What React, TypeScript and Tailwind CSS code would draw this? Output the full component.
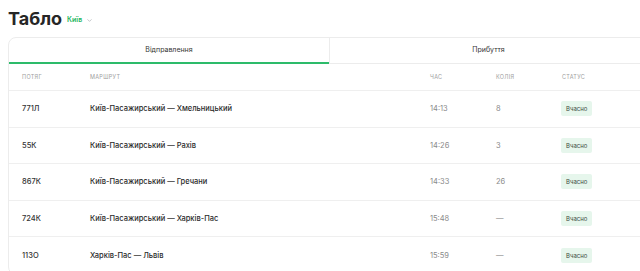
import React, { useState } from 'react';
import { ChevronDown } from 'lucide-react';

type Train = { num: string; route: string; time: string; track: string; status: string };

const trains: Train[] = [
  { num: '771Л', route: 'Київ-Пасажирський — Хмельницький', time: '14:13', track: '8', status: 'Вчасно' },
  { num: '55К', route: 'Київ-Пасажирський — Рахів', time: '14:26', track: '3', status: 'Вчасно' },
  { num: '867К', route: 'Київ-Пасажирський — Гречани', time: '14:33', track: '26', status: 'Вчасно' },
  { num: '724К', route: 'Київ-Пасажирський — Харків-Пас', time: '15:48', track: '—', status: 'Вчасно' },
  { num: '113О', route: 'Харків-Пас — Львів', time: '15:59', track: '—', status: 'Вчасно' },
];

const cols = 'grid grid-cols-[68px_340px_66px_66px_1fr] items-center pl-[13px]';

export default function App() {
  const [tab, setTab] = useState<'dep' | 'arr'>('dep');

  return (
    <div className="w-[640px] h-[271px] overflow-hidden bg-white font-['Inter',sans-serif] text-[#222]">
      {/* Heading */}
      <div className="flex items-center pl-2 pt-[1px] h-[37px]">
        <h1 className="text-[18px] font-bold leading-none text-[#262626]">Табло</h1>
        <button className="ml-[5px] mt-[2px] flex items-center gap-[4px] text-[7px] font-semibold text-[#22b55c]">
          Київ
          <ChevronDown size={7} className="text-[#9aa0a6]" strokeWidth={2} />
        </button>
      </div>

      {/* Card */}
      <div className="ml-2 w-[640px] border border-[#ececec] rounded-[8px] overflow-hidden">
        <div className="flex h-[26px] text-[7px] text-[#333]">
          <button
            onClick={() => setTab('dep')}
            className={`w-[320px] flex items-center justify-center border-b-2 ${tab === 'dep' ? 'border-[#2dbb6a]' : 'border-[#ececec]'}`}
          >
            Відправлення
          </button>
          <button
            onClick={() => setTab('arr')}
            className={`flex-1 flex items-center justify-center border-l border-[#ececec] border-b ${tab === 'arr' ? 'border-b-2 border-b-[#2dbb6a]' : 'border-b-[#ececec]'}`}
          >
            Прибуття
          </button>
        </div>

        <div className={`${cols} h-[27px] text-[5.5px] uppercase text-[#a0a0a0] tracking-[0.3px] border-b border-[#efefef]`}>
          <span>Потяг</span>
          <span>Маршрут</span>
          <span>Час</span>
          <span>Колія</span>
          <span>Статус</span>
        </div>

        {trains.map((t, i) => (
          <div
            key={t.num}
            className={`${cols} h-[36.5px] text-[7.5px] ${i < trains.length - 1 ? 'border-b border-[#efefef]' : ''}`}
          >
            <span className="font-medium text-[#333]">{t.num}</span>
            <span className="font-medium text-[#2a2a2a]">{t.route}</span>
            <span className="text-[#8a8a8a]">{t.time}</span>
            <span className="text-[#8a8a8a]">{t.track}</span>
            <span>
              <span className="inline-block bg-[#e6f6ec] text-[#3b4a40] text-[6px] rounded-[2px] px-[5px] py-[3px] -ml-[1px]">
                {t.status}
              </span>
            </span>
          </div>
        ))}
      </div>
    </div>
  );
}
